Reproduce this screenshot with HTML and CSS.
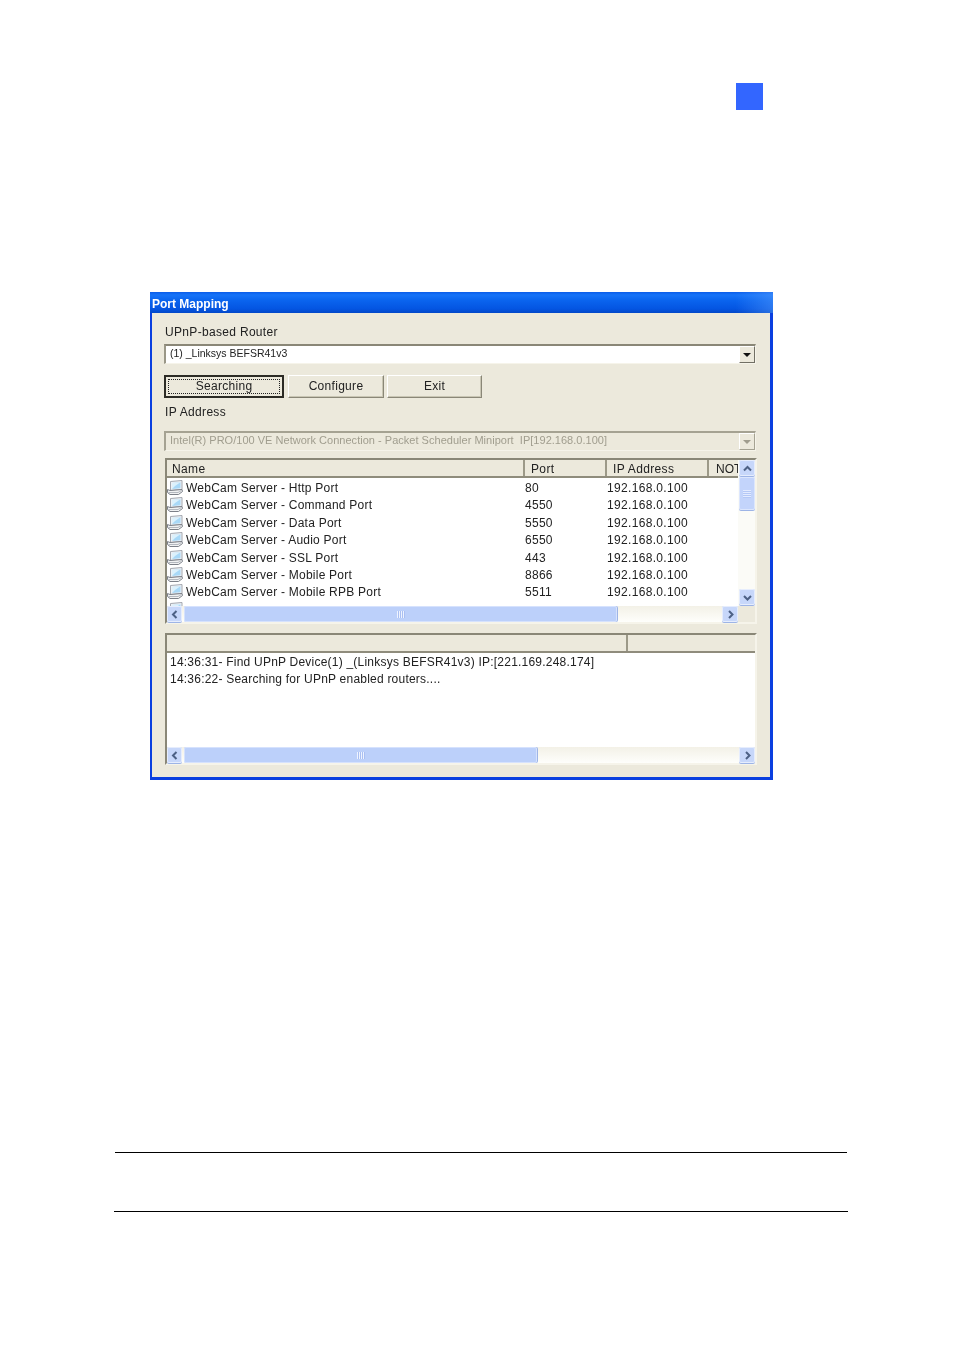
FILE: index.html
```html
<!DOCTYPE html>
<html lang="en">
<head>
<meta charset="utf-8">
<title>Port Mapping</title>
<link rel="stylesheet" href="styles.css">
</head>
<body>
<svg class="defs" width="0" height="0" aria-hidden="true">
  <symbol id="net" viewBox="0 0 16 16">
    <path d="M3.5 1.5 15 .5V9.5L3.5 10.5Z" fill="#eef1f5" stroke="#a4a8b0" stroke-width="1"/>
    <path d="M5 3 13.5 2.2V8.2L5 9Z" fill="#a8d8f7"/>
    <path d="M5 3 13.5 2.2 8 6 5 9Z" fill="#dcf1fc"/>
    <path d="M.5 9.5 3 10.5 15 9.5 15.5 11.5 11.5 14.5 3 14.5 .5 12.5Z" fill="#f0f1f2" stroke="#7c8088" stroke-width="1"/>
    <path d="M1.5 12.5 11 12.5 14.5 10.5" fill="none" stroke="#b4b8bf" stroke-width="1"/>
  </symbol>
  <symbol id="down" viewBox="0 0 9 9"><path d="M1 3 4.5 6.5 8 3" fill="none" stroke="#4d6185" stroke-width="2"/></symbol>
  <symbol id="up" viewBox="0 0 9 9"><path d="M1 6.5 4.5 3 8 6.5" fill="none" stroke="#4d6185" stroke-width="2"/></symbol>
  <symbol id="left" viewBox="0 0 9 9"><path d="M6.5 1 3 4.5 6.5 8" fill="none" stroke="#4d6185" stroke-width="2"/></symbol>
  <symbol id="right" viewBox="0 0 9 9"><path d="M3 1 6.5 4.5 3 8" fill="none" stroke="#4d6185" stroke-width="2"/></symbol>
</svg>

<div class="marker"></div>

<section class="window">
  <h1 class="titlebar">Port Mapping</h1>
  <div class="client">
    <div class="label first">UPnP-based Router</div>
    <div class="combo">
      <span class="combo-text">(1) _Linksys BEFSR41v3</span>
      <span class="combo-btn"><i class="tri"></i></span>
    </div>
    <div class="buttons">
      <div class="btn btn-default"><span class="focus">Searching</span></div>
      <div class="btn btn-config">Configure</div>
      <div class="btn btn-exit">Exit</div>
    </div>
    <div class="label second">IP Address</div>
    <div class="combo disabled">
      <span class="combo-text">Intel(R) PRO/100 VE Network Connection - Packet Scheduler Miniport&nbsp; IP[192.168.0.100]</span>
      <span class="combo-btn"><i class="tri"></i></span>
    </div>

    <div class="frame list">
      <div class="list-main">
        <div class="header">
          <div class="hcell c-name">Name</div>
          <div class="hcell c-port">Port</div>
          <div class="hcell c-ip">IP Address</div>
          <div class="hcell c-not">NOT</div>
        </div>
        <div class="rows">
          <div class="row"><svg class="ico"><use href="#net"/></svg><span class="name">WebCam Server - Http Port</span><span class="port">80</span><span class="ip">192.168.0.100</span></div>
          <div class="row"><svg class="ico"><use href="#net"/></svg><span class="name">WebCam Server - Command Port</span><span class="port">4550</span><span class="ip">192.168.0.100</span></div>
          <div class="row"><svg class="ico"><use href="#net"/></svg><span class="name">WebCam Server - Data Port</span><span class="port">5550</span><span class="ip">192.168.0.100</span></div>
          <div class="row"><svg class="ico"><use href="#net"/></svg><span class="name">WebCam Server - Audio Port</span><span class="port">6550</span><span class="ip">192.168.0.100</span></div>
          <div class="row"><svg class="ico"><use href="#net"/></svg><span class="name">WebCam Server - SSL Port</span><span class="port">443</span><span class="ip">192.168.0.100</span></div>
          <div class="row"><svg class="ico"><use href="#net"/></svg><span class="name">WebCam Server - Mobile Port</span><span class="port">8866</span><span class="ip">192.168.0.100</span></div>
          <div class="row"><svg class="ico"><use href="#net"/></svg><span class="name">WebCam Server - Mobile RPB Port</span><span class="port">5511</span><span class="ip">192.168.0.100</span></div>
          <div class="row"><svg class="ico"><use href="#net"/></svg></div>
        </div>
      </div>
      <div class="vscroll">
        <div class="sb-btn"><svg class="arrow"><use href="#up"/></svg></div>
        <div class="vthumb"><i class="vgrip"></i></div>
        <div class="sb-btn end"><svg class="arrow"><use href="#down"/></svg></div>
      </div>
      <div class="hscroll">
        <div class="sb-btn sb-left"><svg class="arrow"><use href="#left"/></svg></div>
        <div class="hthumb list-thumb"><i class="hgrip"></i></div>
        <div class="sb-btn end"><svg class="arrow"><use href="#right"/></svg></div>
      </div>
      <div class="corner"></div>
    </div>

    <div class="frame log">
      <div class="header log-header">
        <div class="hcell l-a"></div>
        <div class="hcell l-b"></div>
      </div>
      <div class="log-body">
        <div class="log-line">14:36:31- Find UPnP Device(1) _(Linksys BEFSR41v3) IP:[221.169.248.174]</div>
        <div class="log-line">14:36:22- Searching for UPnP enabled routers....</div>
      </div>
      <div class="hscroll">
        <div class="sb-btn sb-left"><svg class="arrow"><use href="#left"/></svg></div>
        <div class="hthumb log-thumb"><i class="hgrip"></i></div>
        <div class="sb-btn end"><svg class="arrow"><use href="#right"/></svg></div>
      </div>
    </div>
  </div>
</section>

<hr class="rule rule-a">
<hr class="rule rule-b">
</body>
</html>
```

FILE: styles.css
```css
* { box-sizing: border-box; }
html, body { margin: 0; padding: 0; background: #fff; }
body { height: 1350px; overflow: hidden; font-family: "Liberation Sans", Arial, sans-serif; font-size: 12px; color: #222; }
.defs { display: block; height: 0; }

.marker { width: 27px; height: 27px; margin: 83px 0 0 736px; background: #3366ff; }

.window {
  width: 623px; height: 488px; margin: 182px 0 0 150px;
  display: flex; flex-direction: column;
  background: #0a3fe0;
  padding: 0 3px 3px 2px;
  filter: blur(.35px);
}
.titlebar {
  margin: 0 -3px 0 -2px; height: 21px; padding: 2px 0 0 2px;
  font-size: 12px; font-weight: bold; line-height: 20px; color: #fff;
  background:
    linear-gradient(90deg, rgba(0,0,0,0) 94%, rgba(90,160,255,.45) 100%),
    linear-gradient(180deg, #0a5ce8 0%, #1673f8 14%, #0a64ee 40%, #0455e2 80%, #0348c8 100%);
}
.client { flex: 1; min-height: 0; background: #ece9dc; padding: 0 14px 0 12px; }

.label { height: 14px; line-height: 14px; padding-left: 1px; letter-spacing: .32px; }
.label.first { margin-top: 12px; }
.label.second { margin-top: 7px; }

.combo {
  height: 20px; margin-top: 5px;
  display: flex; align-items: center; justify-content: space-between;
  background: #fff;
  border-top: 2px solid #8a8777; border-left: 2px solid #9a9787;
  border-right: 1px solid #f6f4ea; border-bottom: 1px solid #f6f4ea;
}
.combo-text { padding: 0 0 4px 4px; font-size: 10.5px; line-height: 16px; white-space: nowrap; }
.combo-btn {
  width: 16px; height: 17px; display: flex; align-items: center; justify-content: center;
  background: #ece9dc;
  border: 1px solid; border-color: #fff #716f64 #716f64 #fff;
}
.tri { width: 0; height: 0; border: 4px solid transparent; border-top: 4px solid #111; border-bottom: 0; }
.combo.disabled { margin-top: 12px; background: #ece9dc; border-top-color: #a5a292; border-left-color: #a5a292; }
.combo.disabled .combo-text { font-size: 11px; letter-spacing: .02px; color: #a09d8e; }
.combo.disabled .tri { border-top-color: #a09d8e; }
.combo.disabled .combo-btn { border-color: #fff #a5a292 #a5a292 #fff; }

.buttons { display: flex; margin-top: 11px; height: 23px; letter-spacing: .3px; }
.btn {
  display: flex; align-items: center; justify-content: center;
  padding-bottom: 2px;
  background: #ece9dc;
  border: 1px solid; border-color: #fff #8a8777 #8a8777 #fff;
  box-shadow: inset -1px -1px 0 #c9c6b4;
}
.btn-default { width: 120px; margin-right: 4px; padding: 2px; border: 2px solid #2c2b25; box-shadow: none; }
.focus { flex: 1; align-self: stretch; text-align: center; line-height: 13px; border: 1px dotted #222; }
.btn-config { width: 96px; margin-right: 3px; }
.btn-exit { width: 95px; }

.frame {
  margin-left: 1px; width: 592px; background: #fff;
  border-top: 2px solid #8a8777; border-left: 2px solid #8a8777;
  border-right: 2px solid #f6f4ea; border-bottom: 2px solid #f6f4ea;
}
.list {
  margin-top: 7px; height: 166px;
  display: grid; grid-template-columns: 571px 17px; grid-template-rows: 146px 16px;
}
.log { margin-top: 9px; height: 132px; display: flex; flex-direction: column; }

.list-main { overflow: hidden; }
.header { display: flex; height: 18px; background: #ece9dc; border-bottom: 2px solid #8f8c7c; }
.hcell { height: 16px; line-height: 18px; padding-left: 5px; border-right: 2px solid #9c9988; white-space: nowrap; overflow: hidden; letter-spacing: .35px; }
.c-name { width: 358px; }
.c-port { width: 82px; padding-left: 6px; }
.c-ip { width: 102px; padding-left: 6px; }
.c-not { flex: 1; padding-left: 7px; border-right: 0; letter-spacing: 0; }

.rows { height: 128px; padding-top: 1.4px; overflow: hidden; }
.row { display: flex; align-items: center; height: 17.4px; white-space: nowrap; }
.ico { width: 16px; height: 16px; flex: none; }
.name { width: 339px; margin-left: 3px; letter-spacing: .23px; }
.port { width: 82px; letter-spacing: .28px; }
.ip { letter-spacing: .33px; }

.vscroll { display: flex; flex-direction: column; background: #fbfbf7; padding: 0 0 1px 1px; }
.hscroll { display: flex; align-items: stretch; height: 16px; background: linear-gradient(180deg, #f3f1e7, #fefefb); }
.sb-btn {
  flex: none; width: 16px; height: 16px; display: flex; align-items: center; justify-content: center;
  background: #c7d7fa; border-radius: 2px;
  box-shadow: inset 0 0 0 1px #e6edfd, 0 1px 0 #9db4e6;
}
.sb-btn.sb-left { width: 15px; }
.sb-btn.end { margin-top: auto; margin-left: auto; }
.arrow { width: 9px; height: 9px; }
.vthumb { width: 16px; height: 33px; margin-top: 1px; display: flex; align-items: center; justify-content: center; background: #c3d4fb; border-radius: 2px; box-shadow: inset 0 0 0 1px #dce6fd, 0 1px 0 #9db4e6; }
.vgrip { width: 8px; height: 8px; background: repeating-linear-gradient(180deg, #e3ebff 0 1px, #b4c8f6 1px 2px); }
.hthumb { margin-left: 2px; display: flex; align-items: center; justify-content: center; background: #bcd0fa; border-radius: 2px; box-shadow: inset 0 0 0 1px #d6e2fd, 1px 0 0 #9db4e6; }
.hgrip { width: 8px; height: 7px; background: repeating-linear-gradient(90deg, #eef3ff 0 1px, #a9bff2 1px 2px); }
.list-thumb { width: 433px; }
.log-thumb { width: 353px; }
.corner { background: #ece9dc; }

.log-header { flex: none; }
.l-a { width: 461px; }
.l-b { flex: 1; border-right: 0; }
.log-body { flex: 1; padding: 1.4px 0 0 3px; }
.log-line { height: 17px; line-height: 17px; letter-spacing: .22px; white-space: nowrap; }

.rule { display: block; border: 0; height: 1px; background: #000; }
.rule-a { width: 732px; margin: 372px 0 0 115px; }
.rule-b { width: 734px; margin: 58px 0 0 114px; }
```
